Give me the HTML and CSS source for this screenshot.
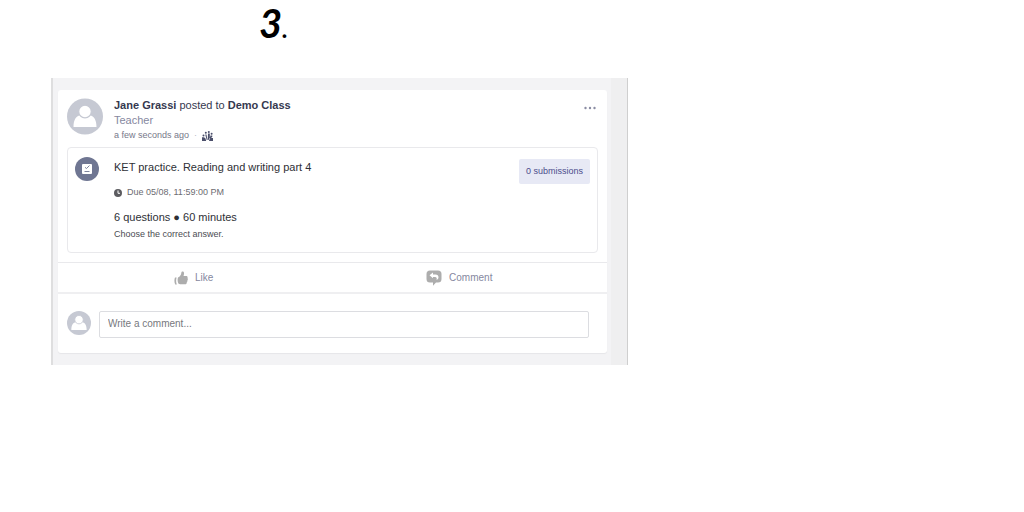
FILE: index.html
```
<!DOCTYPE html>
<html lang="en">
<head>
    <meta charset="UTF-8">
    <title>Demo Class</title>
    <link rel="stylesheet" href="styles.css">
</head>
<body>

<h1 class="step">3<span class="step-dot">.</span></h1>

<main class="feed">
    <article class="post">
        <header class="post-header">
            <svg class="avatar" viewBox="0 0 36 36" aria-hidden="true">
                <circle cx="18" cy="18" r="18" fill="#c6c9d3"/>
                <path d="M6.500 28.500C6.500 21.500 9 17.500 13 17c3 2.500 7 2.500 10 0 4 .5 6.500 4.500 6.500 11.500z" fill="#fff"/>
                <circle cx="18" cy="13" r="6.300" fill="#fff" stroke="#c6c9d3" stroke-width="1.200"/>
            </svg>
            <div class="post-info">
                <div class="post-title"><b>Jane Grassi</b> posted to <b>Demo Class</b></div>
                <div class="role">Teacher</div>
                <div class="time">
                    <span>a few seconds ago</span>
                    <span class="dot">·</span>
                    <svg class="group-icon" viewBox="0 0 11 10" aria-hidden="true">
                        <g fill="#4b4f6b">
                            <circle cx="1.500" cy="4.500" r="1"/>
                            <circle cx="3.800" cy="1.800" r="1"/>
                            <circle cx="6.800" cy="1" r="1"/>
                            <circle cx="9.600" cy="2.800" r="1"/>
                            <path d="M0 6.300h2l1.500 1.200L4.200 10H0zM3.200 3.500h1.300L5.500 9H4.700zM6 2.500h1.800v4L6.500 9H5.800zM8.500 4.500h1.800v1.300L8.500 7.500H7.600zM7.500 8.300L9 7h2v3H7z"/>
                        </g>
                    </svg>
                </div>
            </div>
            <button class="more" type="button" aria-label="More options">
                <svg width="12" height="4" viewBox="0 0 12 4">
                    <g fill="#8b8da3">
                        <circle cx="1.500" cy="2" r="1.200"/>
                        <circle cx="6" cy="2" r="1.200"/>
                        <circle cx="10.500" cy="2" r="1.200"/>
                    </g>
                </svg>
            </button>
        </header>

        <section class="quiz">
            <svg class="quiz-icon" viewBox="0 0 24 24" aria-hidden="true">
                <circle cx="12" cy="12" r="12" fill="#6f7692"/>
                <rect x="7" y="7" width="10" height="10" rx="1" fill="#fff"/>
                <path d="M10 10.300l1.500 1.200 3-3M9.500 14.500h5" stroke="#6f7692" stroke-width=".9" fill="none"/>
            </svg>
            <div class="quiz-info">
                <h2 class="quiz-title">KET practice. Reading and writing part 4</h2>
                <div class="due">
                    <svg width="8" height="8" viewBox="0 0 8 8" aria-hidden="true">
                        <circle cx="4" cy="4" r="4" fill="#5c5c60"/>
                        <path d="M4 1.500V4.300h2" stroke="#fff" fill="none"/>
                    </svg>
                    <span>Due 05/08, 11:59:00 PM</span>
                </div>
                <div class="quiz-size">6 questions ● 60 minutes</div>
                <div class="quiz-text">Choose the correct answer.</div>
            </div>
            <button class="submissions" type="button">0 submissions</button>
        </section>

        <div class="actions">
            <button class="action" type="button">
                <svg width="14" height="14" viewBox="0 0 14 14" aria-hidden="true">
                    <g fill="#adadad">
                        <path d="M1 6.500C.2 8.500.2 11 1.200 13.500h1.600C1.900 11 1.900 8.800 2.600 6.500z"/>
                        <path d="M4 6.500C6 5.500 7.200 4 7.400 1.500 7.500.2 9.800-.1 10 2c.1 1.300-.2 2.300-.5 3h2.700c1.400 0 1.700 1.300 1.200 2 .7.700.6 1.700 0 2.200.3.800 0 1.600-.6 2 .1 1.200-.6 2-1.800 2H7c-1.300 0-2-.4-2.800-1C3.500 10.200 3.400 8.300 4 6.500z"/>
                    </g>
                </svg>
                Like
            </button>
            <button class="action" type="button">
                <svg width="16" height="16" viewBox="0 0 16 16" aria-hidden="true">
                    <path d="M4 0.500h8Q15.500.5 15.500 4v5q0 3.500-3.500 3.500H10L7 15.800v-3.300H4Q.5 12.500.5 9V4Q.5.5 4 .5z" fill="#adadad"/>
                    <path d="M3.500 5.300L7 2.500v2h2.500c2 0 3 1.200 3 2.700 0 1.300-.8 2.300-2 2.800.6-1.500.3-3-1.500-3H7v1.300z" fill="#fff"/>
                </svg>
                Comment
            </button>
        </div>

        <form class="comment-form">
            <svg class="avatar-small" viewBox="0 0 36 36" aria-hidden="true">
                <circle cx="18" cy="18" r="18" fill="#c6c9d3"/>
                <path d="M6.500 28.500C6.500 21.500 9 17.500 13 17c3 2.500 7 2.500 10 0 4 .5 6.500 4.500 6.500 11.500z" fill="#fff"/>
                <circle cx="18" cy="13" r="6.300" fill="#fff" stroke="#c6c9d3" stroke-width="1.200"/>
            </svg>
            <input class="comment-input" type="text" placeholder="Write a comment..." aria-label="Write a comment">
        </form>
    </article>
    <div class="gutter"></div>
</main>

</body>
</html>
```
FILE: styles.css
```
* {
    box-sizing: border-box;
}
body {
    margin: 0;
    padding: 0 51px;
    background-color: #fff;
    color: #35384f;
    font-family: "Liberation Sans", Arial, sans-serif;
    font-size: 11px;
    line-height: 15px;
}
button {
    border: 0;
    padding: 0;
    background: none;
    font: inherit;
    cursor: pointer;
}
.step {
    margin: 0;
    padding-left: 208px;
    height: 78px;
    color: #000;
    font: italic bold 40px/46px Lato, sans-serif;
}
.step-dot {
    font-size: 24px;
}
.feed {
    display: flex;
    max-width: 577px;
    padding: 12px 0 12px 5px;
    background-color: #f3f3f5;
    border-left: 2px solid #dededf;
    border-right: 1px solid #cfcfcf;
}
.post {
    flex: 1;
    background-color: #fff;
    border-radius: 3px;
    box-shadow: 0 1px 1px #e6e6e9;
}
.gutter {
    width: 16px;
    margin: -12px 0 -12px 4px;
    background-color: #efeff0;
}
.post-header {
    display: flex;
    padding: 8px 9px 4px;
}
.avatar {
    width: 36px;
    height: 37px;
}
.post-info {
    flex: 1;
    padding-left: 11px;
}
.role {
    color: #8688a0;
}
.time {
    display: flex;
    align-items: center;
    gap: 5px;
    color: #77798a;
    font-size: 9px;
}
.dot {
    color: #b5b7c5;
}
.group-icon {
    width: 11px;
    height: 10px;
}
.more {
    align-self: flex-start;
    padding: 8px 2px;
    line-height: 0;
}
.quiz {
    display: flex;
    align-items: flex-start;
    margin: 0 9px;
    padding: 9px 7px 10px;
    border: 1px solid #e9e9ec;
    border-radius: 4px;
}
.quiz-icon {
    width: 24px;
    height: 24px;
}
.quiz-info {
    flex: 1;
    padding-left: 15px;
    color: #2e3036;
}
.quiz-title {
    margin: 3px 0 10px;
    font-size: 11px;
    font-weight: normal;
}
.due {
    display: flex;
    align-items: center;
    gap: 5px;
    margin-bottom: 10px;
    color: #6c6c72;
    font-size: 9px;
}
.quiz-size {
    margin-bottom: 2px;
}
.quiz-text {
    color: #4b4c52;
    font-size: 9px;
}
.submissions {
    height: 25px;
    margin-top: 2px;
    padding: 0 7px;
    background-color: #e7e9f5;
    border-radius: 2px;
    color: #4c4d8c;
    font-size: 9px;
}
.actions {
    display: flex;
    margin-top: 9px;
    padding: 0 15px 0 3px;
    border-top: 1px solid #e9e9ec;
    border-bottom: 2px solid #efeff1;
}
.action {
    flex: 1;
    display: flex;
    align-items: center;
    justify-content: center;
    gap: 7px;
    height: 29px;
    color: #8688a0;
    font-size: 10px;
}
.comment-form {
    display: flex;
    align-items: flex-start;
    gap: 8px;
    padding: 17px 18px 15px 9px;
}
.avatar-small {
    width: 24px;
    height: 24px;
}
.comment-input {
    flex: 1;
    height: 27px;
    padding: 0 8px 2px;
    border: 1px solid #dcdde1;
    border-radius: 2px;
    color: #35384f;
    font: inherit;
    font-size: 10px;
}
.comment-input::placeholder {
    color: #77787d;
}
```
